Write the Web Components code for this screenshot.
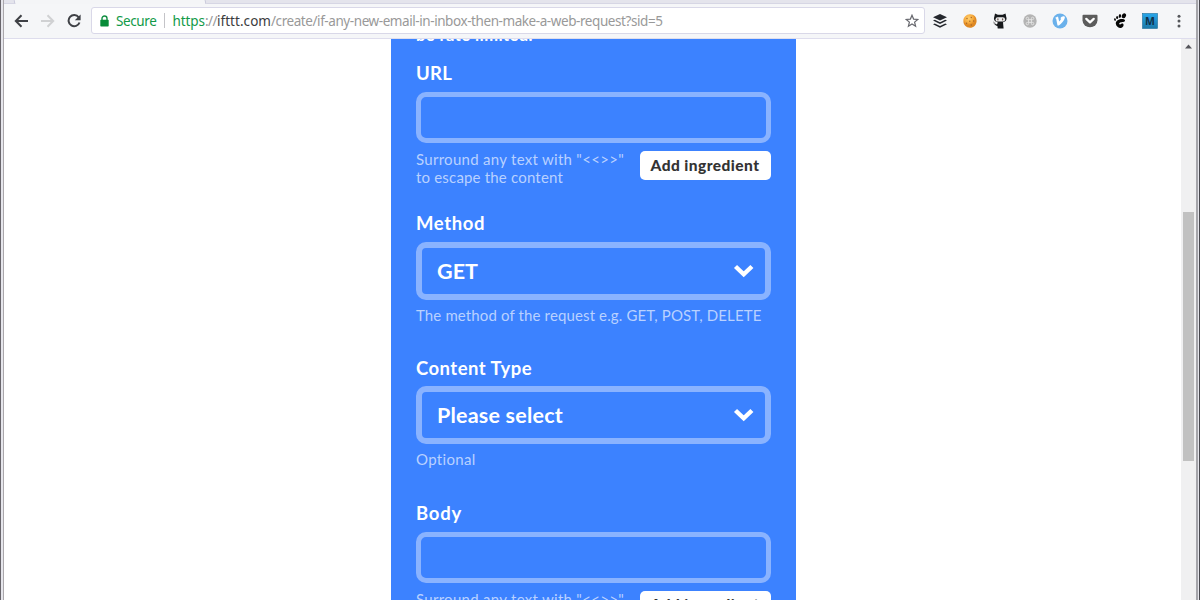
<!DOCTYPE html>
<html lang="en">
<head>
<meta charset="utf-8">
<title>IFTTT</title>
<style>
html, body { margin: 0; height: 100%; overflow: hidden; background: #fff; }
</style>
</head>
<body>
<browser-window></browser-window>
<script>
const define = (name, html, setup) => {
  const template = document.createElement('template');
  template.innerHTML = html;
  customElements.define(name, class extends HTMLElement {
    constructor() {
      super();
      this.attachShadow({ mode: 'open' }).append(template.content.cloneNode(true));
    }
    connectedCallback() { if (setup) setup(this, this.shadowRoot); }
  });
};

// A single line of text whose tracking is spread to a given width.
define('fit-text', `<style>
:host { display: inline-block; white-space: nowrap; }
span { display: block; width: max-content; }
</style><span><slot></slot></span>`, (host, root) => {
  const target = parseFloat(host.getAttribute('width'));
  const span = root.querySelector('span');
  const n = host.textContent.length;
  const w = span.getBoundingClientRect().width;
  if (w && target) span.style.letterSpacing = ((target - w) / n).toFixed(3) + 'px';
});

define('tab-strip', `
<style>
:host { display: flex; height: 4px; background: #e4e4ec; padding-left: 10px; }
i { width: 190px; height: 4px; background: #f4f5f7; border: solid #c9c9da; border-width: 0 1px; transform: skewX(12deg); }
:host { box-sizing: border-box; border-bottom: 1px solid #d6d6e4; }
</style><i></i>`);

define('address-bar', `
<style>
:host { display: flex; align-items: center; box-sizing: border-box; width: 834px; height: 27px; background: #fff;
  border: 1.5px solid #d9d8e8; border-radius: 3px; padding: 0 5px 0 8px; font: 13.5px/20px "Noto Sans", sans-serif; color: #999; }
.lock { margin-right: 7px; }
.green { color: #129a48; }
.bar { width: 1px; height: 15px; background: #c4c4c8; margin: 0 8px 0 7px; }
.host { color: #3c3c40; }
.star { margin-left: auto; }
fit-text { display: block; }
</style>
<svg class="lock" width="9" height="12" viewBox="0 0 9 12"><path d="M2 6V3.500a2.500 2.500 0 0 1 5 0V6" fill="none" stroke="#128f42" stroke-width="1.400"/><rect x=".3" y="4.800" width="8.400" height="6.600" rx=".7" fill="#078b38"/></svg>
<fit-text class="green" width="40.5">Secure</fit-text><span class="bar"></span>
<fit-text class="green" width="32.5">https</fit-text><fit-text width="12">://</fit-text><fit-text class="host" width="54">ifttt.com</fit-text><fit-text width="391.5">/create/if-any-new-email-in-inbox-then-make-a-web-request?sid=5</fit-text>
<svg class="star" width="14" height="14" viewBox="0 0 14 14"><path d="M7 1.200 8.600 5.100l4.200.3-3.200 2.700 1 4.100L7 10l-3.600 2.200 1-4.100L1.200 5.400l4.200-.3z" fill="none" stroke="#66676d" stroke-width="1.200"/></svg>`);

define('extension-icons', `
<style>
:host { display: flex; align-items: center; gap: 14px; }
svg { width: 16px; height: 16px; display: block; flex: none; }
</style>
<svg viewBox="0 0 16 16" fill="#25282e"><path d="M8 1 15 4.300 8 7.600 1 4.300z"/><path d="M1 7.600 2.800 6.800 8 9.200l5.200-2.400 1.800.8L8 11z"/><path d="M1 11.300l1.800-.8L8 12.900l5.200-2.400 1.800.8L8 14.700z"/></svg>
<svg viewBox="0 0 16 16"><defs><radialGradient id="c" cx=".4" cy=".3"><stop offset="0" stop-color="#ffd070"/><stop offset=".7" stop-color="#f5a93c"/><stop offset="1" stop-color="#df8924"/></radialGradient></defs><path d="M7.800 1.300C12 1 14.800 4.300 14.600 8.200 14.400 12 11.600 14.700 8 14.700 4 14.700 1.400 11.800 1.400 8S4.200 1.500 7.800 1.300z" fill="url(#c)"/><g fill="#a5662a"><circle cx="5" cy="5.500" r=".7"/><circle cx="9.300" cy="4.500" r=".7"/><circle cx="7.800" cy="8.300" r=".7"/><circle cx="11.600" cy="8" r=".7"/><circle cx="4.600" cy="10.200" r=".7"/><circle cx="9.300" cy="12" r=".7"/></g></svg>
<svg viewBox="0 0 16 16"><path d="M3 .4 5.800 1.700h4.800L13.500.4l.7 3.400c1 2.800-.2 4.900-3.200 5.400l.6 6.300H5.700L5.400 13C3.300 13.200 3 11 1.200 10.600c1.800-.8 2.600 1 4.100.5l.3-1.900C2.600 8.600 1.300 6.600 2.300 3.800z" fill="#17191c"/><rect x="3.500" y="4.200" width="9.600" height="4.400" rx="2.200" fill="#ececec"/><ellipse cx="5.900" cy="6.400" rx=".7" ry="1.100" fill="#6b5753"/><ellipse cx="10.600" cy="6.400" rx=".7" ry="1.100" fill="#6b5753"/><path d="M1 8.800 3.700 10.500" stroke="#999"/></svg>
<svg viewBox="0 0 16 16"><circle cx="8" cy="8" r="6.700" fill="#b4b4b4"/><path d="M6.600 6.600V5.400a1.200 1.200 0 1 0-1.200 1.200h5.200a1.200 1.200 0 1 0-1.200-1.200v5.200a1.200 1.200 0 1 0 1.200-1.200H5.400a1.200 1.200 0 1 0 1.200 1.200z" fill="none" stroke="#e2e2e2" stroke-width="1"/></svg>
<svg viewBox="0 0 16 16"><circle cx="8" cy="8" r="7.500" fill="#6bb1eb"/><path d="M3.200 4.800 6 3.500 7.200 8.600C9 6.800 9.600 5.300 8.300 5.200 9.600 2.700 13.500 2.400 12.800 5c-.5 2.300-3.400 5.800-6 7.600H5.500L4.200 6z" fill="#fff"/></svg>
<svg viewBox="0 0 16 16"><path d="M1.500 1.800h13q1 0 1 1v4.400a7.500 7 0 0 1-15 0V2.800q0-1 1-1z" fill="#5c5c5c"/><path d="M4.300 5.900 8 9.300l3.700-3.400" fill="none" stroke="#fff" stroke-width="2.300" stroke-linecap="round" stroke-linejoin="round"/></svg>
<svg viewBox="0 0 16 16" fill="#070707"><ellipse cx="11.900" cy="2.700" rx="2" ry="2.600" transform="rotate(28 11.900 2.700)"/><ellipse cx="7.900" cy="3" rx="1.200" ry="1.900" transform="rotate(12 7.900 3)"/><ellipse cx="5.100" cy="4.600" rx="1" ry="1.500"/><ellipse cx="3" cy="6.600" rx=".9" ry="1.300" transform="rotate(-15 3 6.600)"/><path d="M11.800 6.300C8.500 5.300 3.400 7.400 3.800 10.800c.3 3 3.300 4.500 5.300 4.100 2-.5 3.100-2.600 2.200-3.900-.8-1-2 .2-3 .4-1.700.1-1.300-1.400 0-1.900 1.800-.5 4.500-.3 4.700-1.700.1-.8-.5-1.300-1.200-1.500z"/></svg>
<svg viewBox="0 0 16 16"><defs><linearGradient id="m" x2="0" y2="1"><stop offset="0" stop-color="#27a6ea"/><stop offset="1" stop-color="#1b78a8"/></linearGradient></defs><rect x=".5" y=".5" width="15" height="15" fill="url(#m)" stroke="#1b6f9c" stroke-width=".6"/><text x="8" y="11.500" text-anchor="middle" font-family="Open Sans, sans-serif" font-weight="700" font-size="10.500" fill="#103049">M</text></svg>
<svg viewBox="0 0 16 16" fill="#55575b" style="margin-left:-1px"><circle cx="8" cy="3.300" r="1.500"/><circle cx="8" cy="8.100" r="1.500"/><circle cx="8" cy="12.900" r="1.500"/></svg>`);

define('tool-bar', `
<style>
:host { display: flex; align-items: center; box-sizing: border-box; height: 35px; padding: 0 0 1px 10px; background: #f5f6f8; border-bottom: 1.500px solid #dedded; }
.nav { display: flex; gap: 12px; width: 77px; flex: none; }
.reload { margin-left: -1px; }
address-bar { flex: none; }
extension-icons { margin-left: 7px; }
</style>
<div class="nav">
<svg width="15" height="14" viewBox="0 0 15 14" fill="none" stroke="#3f4146" stroke-width="2"><path d="M14 7H2.500M7.500 1.200 1.800 7l5.700 5.800"/></svg>
<svg width="15" height="14" viewBox="0 0 15 14" fill="none" stroke="#d0d1d3" stroke-width="2"><path d="M0 7h12M6.500 1.200 12.200 7l-5.700 5.800"/></svg>
<svg class="reload" width="14" height="14" viewBox="0 0 14 14"><path d="M11.700 3.300A5.600 5.600 0 1 0 12.500 8.500" fill="none" stroke="#3f4146" stroke-width="2"/><path d="M13.600.5v5.800H7.800z" fill="#3f4146"/></svg>
</div>
<address-bar></address-bar>
<extension-icons></extension-icons>`);

define('scroll-bar', `
<style>
:host { display: flex; flex-direction: column; align-items: center; width: 15px; background: #f0f0f1; }
svg { display: block; margin-top: 5px; }
i { width: 11px; height: 249px; margin-top: 163px; background: #c1c1c1; }
</style><svg width="7" height="5" viewBox="0 0 7 5"><path d="M0 4.500 3.500.5 7 4.500z" fill="#55555a"/></svg><i></i>`);

define('form-field', `
<style>
:host { display: flex; flex-direction: column; box-sizing: border-box; }
.label { font: 700 18.500px/24px Lato, sans-serif; height: 24px; flex: none; margin-bottom: var(--label-gap, 7px); }
.foot { display: flex; justify-content: space-between; align-items: flex-start; }
.hint { font: 15px/18px Lato, sans-serif; color: #b9d1ff; margin-top: -1px; }
</style>
<div class="label"><slot name="label"></slot></div>
<slot></slot>
<div class="foot"><div class="hint"><slot name="hint"></slot></div><slot name="action"></slot></div>`);

define('text-box', `
<style>
:host { display: block; flex: none; box-sizing: border-box; height: 51px; border: 5px solid #8ab3ff; border-radius: 10px; margin-bottom: 8px; }
</style>`);

define('select-box', `
<style>
:host { display: flex; flex: none; align-items: center; justify-content: space-between; box-sizing: border-box; height: 58px; border: 6px solid #8ab3ff; border-radius: 10px; padding: 0 9px 0 15px; margin-bottom: 7px; font: 700 21.500px/28px Lato, sans-serif; }
svg { margin-right: .5px; }
</style><slot></slot>
<svg width="22" height="16" viewBox="0 0 22 16"><path d="M2.500 3.500 10.700 11.300 18.900 3.500" fill="none" stroke="#fff" stroke-width="4.400"/></svg>`);

define('add-button', `
<style>
:host { display: flex; align-items: center; justify-content: center; box-sizing: border-box; width: 131px; height: 29px; padding-bottom: 2px; background: #fff; color: #333; border-radius: 5px; font: 900 15.500px/20px Lato, sans-serif; }
</style><fit-text width="109">Add ingredient</fit-text>`);

define('request-form', `
<style>
:host { display: block; box-sizing: border-box; width: 405px; height: 561px; overflow: hidden; background: #3c82ff; color: #fff; padding: 0 25.500px 0 25px; }
.note { height: 22px; font: 700 16.500px/22px Lato, sans-serif; margin-top: -15px; margin-bottom: 15px; }
fit-text { display: block; }
</style>
<div class="note"><fit-text width="117">be rate limited.</fit-text></div>
<form-field style="height:150px">
  <fit-text slot="label" width="36">URL</fit-text><text-box></text-box>
  <div slot="hint"><fit-text width="208">Surround any text with "&lt;&lt;&gt;&gt;"</fit-text><fit-text width="147">to escape the content</fit-text></div>
  <add-button slot="action"></add-button>
</form-field>
<form-field style="height:145px">
  <fit-text slot="label" width="69">Method</fit-text><select-box><fit-text width="41">GET</fit-text></select-box>
  <fit-text slot="hint" width="345.500">The method of the request e.g. GET, POST, DELETE</fit-text>
</form-field>
<form-field style="height:145px;--label-gap:6.400px">
  <fit-text slot="label" width="116">Content Type</fit-text><select-box><fit-text width="126">Please select</fit-text></select-box>
  <fit-text slot="hint" width="60">Optional</fit-text>
</form-field>
<form-field style="--label-gap:6.500px">
  <fit-text slot="label" width="46">Body</fit-text><text-box></text-box>
  <div slot="hint"><fit-text width="208">Surround any text with "&lt;&lt;&gt;&gt;"</fit-text><fit-text width="147">to escape the content</fit-text></div>
  <add-button slot="action"></add-button>
</form-field>`);

define('browser-window', `
<style>
:host { display: flex; width: 1200px; height: 600px; overflow: hidden; background: #e6e6ec; }
.edge { flex: none; box-sizing: border-box; width: 4px; border-left: 1px solid #69666c; border-right: 1.500px solid #aaa7ab; }
.right { border-left: 2px solid #a5a5aa; border-right: 1px solid #48484e; }
.main { width: 1192px; display: flex; flex-direction: column; }
.page { display: flex; flex: 1; min-height: 0; background: #fff; }
.content { flex: 1; padding-left: 387px; }
scroll-bar { flex: none; }
</style>
<div class="edge"></div>
<div class="main">
  <tab-strip></tab-strip><tool-bar></tool-bar>
  <div class="page"><div class="content"><request-form></request-form></div><scroll-bar></scroll-bar></div>
</div>
<div class="edge right"></div>`);
</script>
</body>
</html>
